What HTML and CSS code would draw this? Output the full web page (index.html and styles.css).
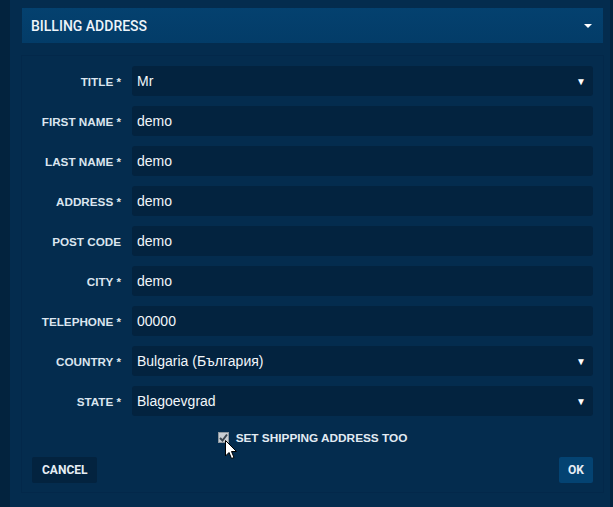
FILE: index.html
```html
<!DOCTYPE html>
<html lang="en">
<head>
    <meta charset="UTF-8">
    <meta name="viewport" content="width=device-width, initial-scale=1.0">
    <title>Billing address</title>
    <link rel="stylesheet" href="styles.css">
</head>
<body>

    <div class="panel">
        <div class="panel-heading">
            <span>BILLING ADDRESS</span>
            <span class="caret"></span>
        </div>

        <form class="address-box">
            <div class="fields">
                <label>TITLE *</label>
                <div class="field select"><span>Mr</span><i>&#9660;</i></div>

                <label>FIRST NAME *</label>
                <div class="field">demo</div>

                <label>LAST NAME *</label>
                <div class="field">demo</div>

                <label>ADDRESS *</label>
                <div class="field">demo</div>

                <label>POST CODE</label>
                <div class="field">demo</div>

                <label>CITY *</label>
                <div class="field">demo</div>

                <label>TELEPHONE *</label>
                <div class="field">00000</div>

                <label>COUNTRY *</label>
                <div class="field select"><span>Bulgaria (България)</span><i>&#9660;</i></div>

                <label>STATE *</label>
                <div class="field select"><span>Blagoevgrad</span><i>&#9660;</i></div>
            </div>

            <div class="shipping">
                <span class="check">
                    <svg width="11" height="11" viewBox="0 0 11 11">
                        <path d="M2 6 L4.5 8.5 L9 2.5" fill="none" stroke="#3b4650" stroke-width="2"/>
                    </svg>
                    <!-- mouse pointer hovering the checkbox -->
                    <svg class="pointer" width="13" height="20" viewBox="0 0 13 20">
                        <path d="M0.5 0.5 L0.5 16 L4 12.5 L6.5 18.5 L9 17.5 L6.5 11.5 L11.5 11.5 Z" fill="#fff" stroke="#000" stroke-width="1"/>
                    </svg>
                </span>
                <span class="shipping-label">SET SHIPPING ADDRESS TOO</span>
            </div>

            <div class="actions">
                <button type="button" class="btn btn-cancel">CANCEL</button>
                <button type="submit" class="btn btn-ok">OK</button>
            </div>
        </form>
    </div>

</body>
</html>
```

FILE: styles.css
```css
* {
    margin: 0;
    padding: 0;
    box-sizing: border-box;
}

body {
    font-family: 'Liberation Sans', Arial, sans-serif;
    background: #03233e;
    color: #e2ebf3;
    height: 100vh;
    overflow: hidden;
    padding-left: 10px;
}

.panel {
    width: 600px;
    height: 507px;
    background: #042c4e;
    padding: 8px 6px 0 11px;
}

.panel-heading {
    margin: 0 1px;
    height: 35px;
    background: linear-gradient(#04416f, #033c68);
    display: flex;
    align-items: center;
    justify-content: space-between;
    padding: 0 11px 0 9px;
    font-family: Roboto, sans-serif;
    font-weight: 500;
    font-size: 14px;
    color: #eef4fa;
}

.caret {
    width: 0;
    height: 0;
    border-left: 4px solid transparent;
    border-right: 4px solid transparent;
    border-top: 4px solid #ffffff;
}

.address-box {
    margin-top: 12px;
    height: 438px;
    border: 1px solid #03284a;
    padding: 10px 10px 9px 10px;
}

.fields {
    display: grid;
    grid-template-columns: 89px 1fr;
    column-gap: 11px;
    row-gap: 10px;
    align-items: center;
}

.fields label {
    text-align: right;
    font-weight: bold;
    font-size: 11.7px;
    color: #dbe5ef;
}

.field {
    height: 30px;
    background: #03233f;
    border-radius: 3px;
    padding: 0 5px;
    display: flex;
    align-items: center;
    font-size: 14px;
    color: #f2f6fa;
}

.select {
    justify-content: space-between;
    padding-right: 7px;
}

.select i {
    font-style: normal;
    font-size: 10px;
    color: #ffffff;
}

.shipping {
    display: flex;
    align-items: center;
    justify-content: center;
    margin-top: 16px;
    height: 11px;
}

.check {
    position: relative;
    width: 11px;
    height: 11px;
    background: #c9ced3;
    border: 1px solid #8f989f;
    margin-right: 7px;
    display: flex;
}

.check svg {
    position: absolute;
    left: -1px;
    top: -1px;
}

.check .pointer {
    left: 6px;
    top: 7px;
}

.shipping-label {
    font-weight: bold;
    font-size: 11.8px;
    color: #e2ebf3;
}

.actions {
    display: flex;
    justify-content: space-between;
    margin-top: 14px;
}

.btn {
    height: 26px;
    padding: 0 9px;
    border: none;
    border-radius: 2px;
    font-family: Roboto, sans-serif;
    font-weight: bold;
    font-size: 12px;
    color: #e6eef5;
    cursor: pointer;
}

.btn-cancel {
    padding: 0 10px;
    background: #03233f;
}

.btn-ok {
    background: #044372;
}
```
